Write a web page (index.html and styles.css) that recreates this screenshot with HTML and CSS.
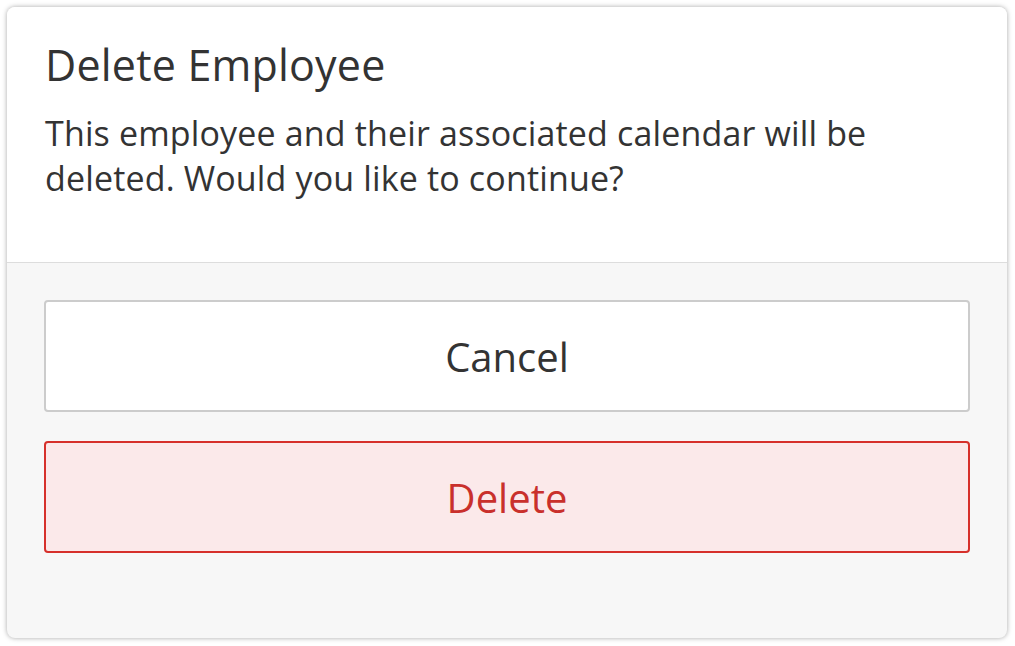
FILE: index.html
```html
<!DOCTYPE html>
<html lang="en">
<head>
    <meta charset="UTF-8">
    <meta name="viewport" content="width=device-width, initial-scale=1.0">
    <title>Delete Employee</title>
    <link rel="stylesheet" href="styles.css">
</head>
<body>
    <div class="dialog">
        <!-- Cabeçalho -->
        <div class="dialog-header">
            <h1 class="dialog-title">Delete Employee</h1>
            <p class="dialog-text">This employee and their associated calendar will be deleted. Would you like to continue?</p>
        </div>

        <!-- Ações -->
        <div class="dialog-actions">
            <button class="dialog-button">Cancel</button>
            <button class="dialog-button danger">Delete</button>
        </div>
    </div>
</body>
</html>
```

FILE: styles.css
```css
body {
    margin: 0;
    padding: 7px 8px 8px 7px;
    background: #ffffff;
    font-family: "Open Sans", "Noto Sans", sans-serif;
    color: #333333;
}

.dialog {
    height: 631px;
    background: #f7f7f7;
    border-radius: 8px;
    box-shadow: 0 0 5px rgba(0, 0, 0, 0.35);
    display: flex;
    flex-direction: column;
    overflow: hidden;
}

.dialog-header {
    background: #ffffff;
    border-bottom: 1px solid #dddddd;
    height: 256px;
    box-sizing: border-box;
    padding: 35px 38px 0 38px;
}

.dialog-title {
    margin: 0;
    font-size: 43px;
    font-weight: 500;
    line-height: 46px;
    letter-spacing: 0.2px;
}

.dialog-text {
    margin: 23px 0 0 0;
    font-size: 34px;
    line-height: 45px;
    letter-spacing: 0.15px;
    width: 850px;
}

.dialog-actions {
    display: flex;
    flex-direction: column;
    gap: 29px;
    padding: 37px 37px 0 37px;
}

.dialog-button {
    height: 112px;
    background: #ffffff;
    border: 2px solid #cccccc;
    border-radius: 4px;
    font-family: inherit;
    font-size: 40px;
    color: #333333;
    cursor: pointer;
}

.dialog-button.danger {
    background: #fbe9ea;
    border-color: #d6302b;
    color: #c9302c;
}
```
